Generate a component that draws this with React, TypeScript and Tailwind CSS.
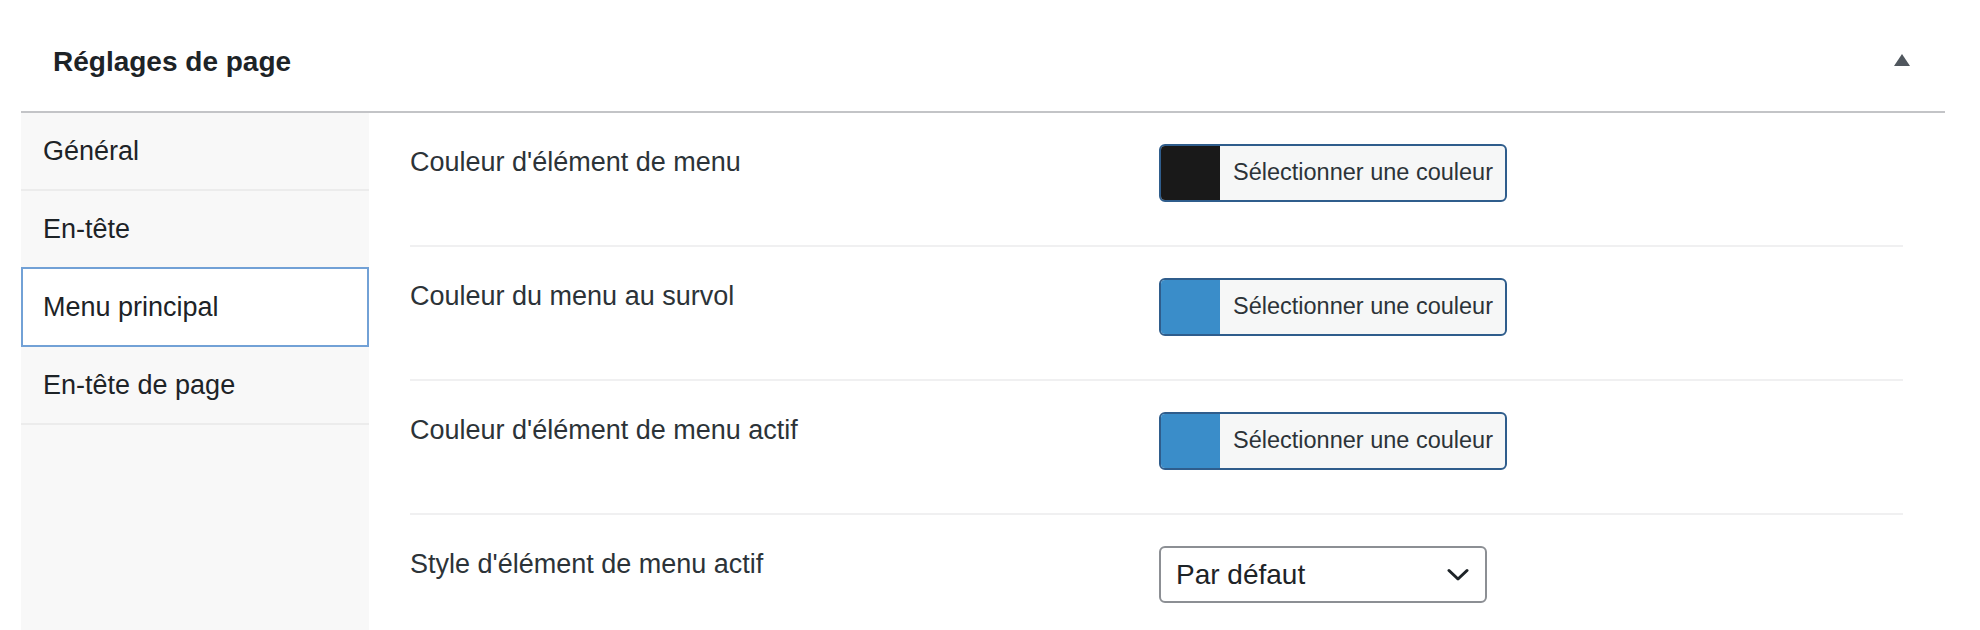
import { useState } from 'react';

const tabs = ['Général', 'En-tête', 'Menu principal', 'En-tête de page'];

const rows = [
  { label: "Couleur d'élément de menu", kind: 'color', swatch: 'bg-[#191919]' },
  { label: 'Couleur du menu au survol', kind: 'color', swatch: 'bg-[#3a8dc9]' },
  { label: "Couleur d'élément de menu actif", kind: 'color', swatch: 'bg-[#3a8dc9]' },
  { label: "Style d'élément de menu actif", kind: 'select', swatch: '' },
];

const ColorButton = ({ swatch }: { swatch: string }) => (
  <button className="flex h-[58px] overflow-hidden rounded-[6px] border-2 border-[#2f5d8c] bg-[#f6f7f7]">
    <span className={`w-[59px] h-full ${swatch}`} />
    <span className="flex h-full items-center pl-[13px] pr-[12px] text-[23.5px] text-[#2c3338]">
      Sélectionner une couleur
    </span>
  </button>
);

const SelectBox = () => (
  <div className="flex h-[57px] w-[328px] items-center justify-between rounded-[6px] border-2 border-[#8c8f94] bg-white pl-[15px] pr-[16px]">
    <span className="text-[28px] text-[#1d2327]">Par défaut</span>
    <svg width="22" height="14" viewBox="0 0 22 14" fill="none">
      <path d="M2 2.5 L11 11 L20 2.5" stroke="#1d2327" strokeWidth="3" strokeLinecap="round" strokeLinejoin="round" />
    </svg>
  </div>
);

export default function App() {
  const [active, setActive] = useState(2);

  return (
    <div className="h-[630px] overflow-hidden bg-white" style={{ fontFamily: '"Liberation Sans", Arial, sans-serif' }}>
      <div className="ml-[21px] mr-[35px]">
        {/* Header */}
        <div className="flex h-[113px] items-center justify-between border-b-2 border-[#c3c4c7] pl-[32px] pr-[35px] pt-[12px]">
          <h2 className="text-[28px] font-bold text-[#1d2327]">Réglages de page</h2>
          <svg width="16" height="12" viewBox="0 0 16 12" className="-mt-[4px]">
            <polygon points="8,0 16,12 0,12" fill="#50575e" />
          </svg>
        </div>

        <div className="flex h-[520px]">
          {/* Tabs */}
          <div className="w-[348px] shrink-0 bg-[#f8f8f8]">
            {tabs.map((t, i) =>
              i === active ? (
                <div
                  key={t}
                  onClick={() => setActive(i)}
                  className="-mt-[2px] flex h-[80px] items-center border-2 border-[#72a1d6] bg-white pl-[20px] text-[27px] text-[#1d2327]"
                >
                  {t}
                </div>
              ) : (
                <div
                  key={t}
                  onClick={() => setActive(i)}
                  className="flex h-[78px] items-center border-b-2 border-[#ececec] pl-[22px] text-[27px] text-[#1d2327]"
                >
                  {t}
                </div>
              )
            )}
          </div>

          {/* Settings */}
          <div className="flex-1 pl-[41px] pr-[42px]">
            {rows.map((r) => (
              <div key={r.label} className="flex h-[134px] border-b-2 border-[#f0f0f1] pt-[31px]">
                <div className="w-[749px] shrink-0 text-[27px] leading-[36px] text-[#2c3338]">{r.label}</div>
                {r.kind === 'color' ? <ColorButton swatch={r.swatch} /> : <SelectBox />}
              </div>
            ))}
          </div>
        </div>
      </div>
    </div>
  );
}
